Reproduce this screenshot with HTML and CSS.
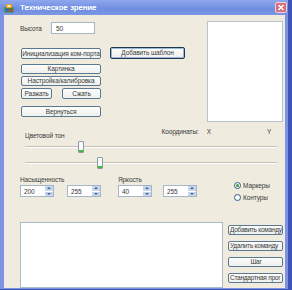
FILE: index.html
```html
<!DOCTYPE html>
<html lang="ru">
<head>
  <meta charset="UTF-8" />
  <title>Техническое зрение</title>
  <link rel="stylesheet" href="styles.css">
</head>
<body>
  <div class="window">
    <div class="titlebar">
      <svg class="app-icon" width="10" height="10" viewBox="0 0 10 10">
        <rect x="0.5" y="4" width="9" height="5.5" fill="#3a8c3a"/>
        <rect x="2" y="1" width="6" height="4" fill="#e8a030"/>
        <rect x="3.5" y="2.2" width="3" height="1.8" fill="#fff2c0"/>
        <rect x="1.5" y="6" width="3" height="2.5" fill="#4060c8"/>
        <rect x="5.5" y="6" width="3" height="2.5" fill="#c84040"/>
      </svg>
      <span class="title">Техническое зрение</span>
      <span class="close-btn">
        <svg width="10" height="9" viewBox="0 0 10 9">
          <path d="M2.5 2 L7.5 7 M7.5 2 L2.5 7" stroke="#fff" stroke-width="1.6"/>
        </svg>
      </span>
    </div>

    <div class="client">
      <div class="top">
        <div class="left">
          <div class="height-row">
            <label for="h">Высота</label>
            <input id="h" class="edit" value="50" />
          </div>
          <button class="btn btn-init">Инициализация ком-порта</button>
          <button class="btn btn-pic">Картинка</button>
          <button class="btn btn-cal">Настройка/калибровка</button>
          <div class="pair">
            <button class="btn btn-open">Разжать</button>
            <button class="btn btn-close">Сжать</button>
          </div>
          <button class="btn btn-back">Вернуться</button>
        </div>
        <div class="mid">
          <button class="btn btn-default">Добавить шаблон</button>
        </div>
        <div class="preview"></div>
      </div>

      <div class="info-row">
        <span class="hue-label">Цветовой тон</span>
        <span class="coords">Координаты:</span>
        <span class="coord-x">X</span>
        <span class="coord-y">Y</span>
      </div>

      <div class="slider slider-1">
        <div class="groove"></div>
        <div class="thumb" style="left: 53px"></div>
      </div>
      <div class="slider slider-2">
        <div class="groove"></div>
        <div class="thumb" style="left: 72px"></div>
      </div>

      <div class="controls">
        <div class="spins">
          <span class="lbl lbl-sat">Насыщенность</span>
          <span class="lbl lbl-bri">Яркость</span>
          <div class="spin"><span class="val">200</span><span class="arrows"><i class="up"></i><i class="down"></i></span></div>
          <div class="spin"><span class="val">255</span><span class="arrows"><i class="up"></i><i class="down"></i></span></div>
          <div class="spin"><span class="val">40</span><span class="arrows"><i class="up"></i><i class="down"></i></span></div>
          <div class="spin"><span class="val">255</span><span class="arrows"><i class="up"></i><i class="down"></i></span></div>
        </div>
        <div class="radios">
          <div class="radio-item"><span class="radio checked"></span>Маркеры</div>
          <div class="radio-item"><span class="radio"></span>Контуры</div>
        </div>
      </div>

      <div class="bottom">
        <div class="program-box"></div>
        <div class="cmd-btns">
          <button class="btn btn-cmd">Добавить команду</button>
          <button class="btn btn-cmd">Удалить команду</button>
          <button class="btn btn-cmd btn-step">Шаг</button>
          <button class="btn btn-cmd">Стандартная прог</button>
        </div>
      </div>
    </div>
  </div>
</body>
</html>
```

FILE: styles.css
```css
html, body {
  margin: 0;
  background: #3d55b8;
  font-family: "Liberation Sans", Arial, sans-serif;
  font-size: 6.5px;
  letter-spacing: -0.1px;
  color: #3a3a3a;
}
.window {
  width: 288px;
  height: 289px;
  display: flex;
  flex-direction: column;
  background: #7d92e0;
}
.titlebar {
  height: 15px;
  display: flex;
  align-items: center;
  background: linear-gradient(to bottom, #8ea8ee, #6f8de0 60%, #7b96e4);
  flex-shrink: 0;
}
.app-icon {
  margin-left: 4px;
}
.title {
  margin-left: 6px;
  color: #fff;
  font-size: 8px;
  letter-spacing: 0.1px;
  text-shadow: 0 0 0.4px #fff;
}
.close-btn {
  margin-left: auto;
  margin-right: 1px;
  width: 10px;
  height: 9px;
  background: #d4707a;
  border: 1px solid #f0d0d4;
  border-radius: 2px;
  display: flex;
}
.client {
  flex: 1;
  margin: 0 3px 3px 4px;
  background: #efecdf;
  padding-left: 16px;
  display: flex;
  flex-direction: column;
}
.top {
  display: flex;
  padding-top: 6px;
  height: 101px;
}
.left {
  width: 81px;
  display: flex;
  flex-direction: column;
}
.height-row {
  display: flex;
  align-items: center;
  margin-top: 1px;
  height: 12px;
}
.height-row label {
  width: 31px;
}
.edit {
  box-sizing: border-box;
  width: 44px;
  height: 12px;
  border: 1px solid #a4b6c8;
  background: #fff;
  font: inherit;
  padding: 0 0 0 4px;
  color: #3a3a3a;
}
.btn {
  box-sizing: border-box;
  font: inherit;
  letter-spacing: inherit;
  color: #3a3a3a;
  padding: 0;
  height: 10px;
  line-height: 8px;
  background: linear-gradient(to bottom, #fdfdfb, #eef0ee);
  border: 1px solid #5a7890;
  border-radius: 2px;
  white-space: nowrap;
  overflow: hidden;
}
.left .btn {
  margin-left: 1px;
  width: 80px;
}
.btn-init {
  margin-top: 14px;
  height: 11px;
}
.btn-pic {
  margin-top: 5px;
}
.btn-cal {
  margin-top: 2px;
}
.pair {
  display: flex;
  margin-top: 2px;
  margin-left: 1px;
  height: 12px;
}
.pair .btn {
  height: 11px;
  margin-left: 0;
}
.btn-open {
  width: 31px !important;
}
.btn-close {
  width: 39px !important;
  margin-left: 10px !important;
}
.btn-back {
  margin-top: 6px;
  height: 11px !important;
}
.mid {
  margin-left: 9px;
}
.btn-default {
  margin-top: 26px;
  width: 75px;
  height: 12px;
  border: 1px solid #1e3850;
  box-shadow: inset 0 0 0 1px #9cb8d8;
}
.preview {
  margin-left: auto;
  margin-right: 2px;
  width: 76px;
  height: 101px;
  box-sizing: border-box;
  background: #fff;
  border: 1px solid #b4c4d0;
}
.info-row {
  display: flex;
  align-items: flex-start;
  height: 18px;
}
.hue-label {
  margin-left: 5px;
  margin-top: 10px;
}
.coords {
  margin-left: 97px;
  margin-top: 6px;
}
.coord-x {
  margin-left: 8px;
  margin-top: 6px;
}
.coord-y {
  margin-left: 56px;
  margin-top: 6px;
}
.slider {
  position: relative;
  margin-left: 5px;
  width: 252px;
  height: 12px;
}
.slider-1 {
  margin-top: 1px;
}
.slider-2 {
  margin-top: 4px;
}
.groove {
  margin-top: 5px;
  height: 1px;
  background: #c4c2b8;
  border-bottom: 1px solid #fff;
}
.thumb {
  position: absolute;
  top: 0;
  width: 4px;
  height: 10px;
  background: #fafaf8;
  border: 1px solid #8a9aa8;
  border-radius: 1px;
  box-shadow: inset 0 -2px 0 #3cc03c;
}
.controls {
  display: flex;
  margin-top: 7px;
}
.spins {
  display: grid;
  grid-template-columns: 47px 51px 45px 34px;
  grid-template-rows: 8px 12px;
  row-gap: 1px;
}
.lbl {
  line-height: 8px;
}
.lbl-sat {
  grid-column: 1 / 3;
}
.lbl-bri {
  grid-column: 3 / 5;
}
.spin {
  box-sizing: border-box;
  width: 34px;
  height: 12px;
  background: #fff;
  border: 1px solid #a4b6c8;
  display: flex;
  align-items: center;
}
.spin .val {
  flex: 1;
  padding-left: 3px;
}
.arrows {
  width: 8px;
  height: 10px;
  display: flex;
  flex-direction: column;
  background: #c6d6f0;
}
.arrows i {
  flex: 1;
  position: relative;
}
.arrows .up {
  border-bottom: 1px solid #fff;
}
.arrows .up::after, .arrows .down::after {
  content: "";
  position: absolute;
  left: 2px;
  top: 1px;
  border-left: 2px solid transparent;
  border-right: 2px solid transparent;
}
.arrows .up::after {
  border-bottom: 2px solid #4d6185;
}
.arrows .down::after {
  border-top: 2px solid #4d6185;
}
.radios {
  margin-left: 37px;
  margin-top: 3px;
  display: flex;
  flex-direction: column;
}
.radio-item {
  display: flex;
  align-items: center;
  height: 12px;
}
.radio {
  box-sizing: border-box;
  width: 7px;
  height: 7px;
  border: 1px solid #2a5a8c;
  border-radius: 50%;
  background: #fff;
  margin-right: 2px;
  display: flex;
  align-items: center;
  justify-content: center;
}
.radio.checked::after {
  content: "";
  width: 3px;
  height: 3px;
  border-radius: 50%;
  background: #30a030;
}
.bottom {
  display: flex;
  margin-top: 19px;
}
.program-box {
  box-sizing: border-box;
  width: 203px;
  height: 66px;
  background: #fff;
  border: 1px solid #a8bcc8;
}
.cmd-btns {
  margin-left: 5px;
  display: flex;
  flex-direction: column;
  gap: 6px;
  padding-top: 3px;
}
.btn-cmd {
  width: 55px;
  height: 10px;
  text-align: left;
  padding-left: 1px;
  letter-spacing: -0.25px;
}
.btn-step {
  text-align: center;
}
```
